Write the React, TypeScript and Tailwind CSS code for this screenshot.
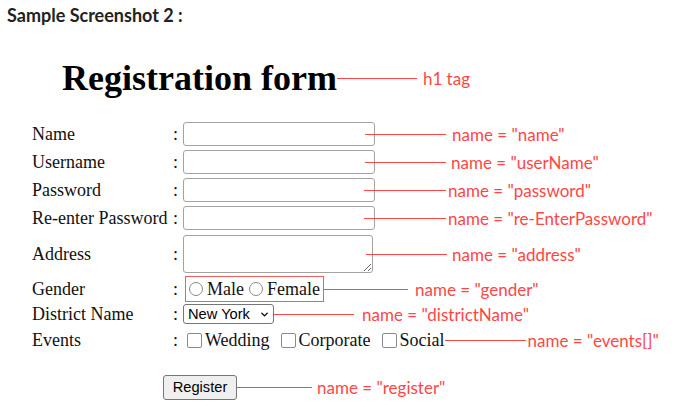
import { ChevronDown } from 'lucide-react';

const serif = "font-['Liberation_Serif',serif]";
const sans = "font-['Liberation_Sans',Arial,sans-serif]";

function Note({ line, gap, text, shift = 0 }: { line: number; gap: number; text: string; shift?: number }) {
  return (
    <div className="flex items-center relative z-10" style={{ marginLeft: shift }}>
      <div className="h-px bg-[#ff4646]" style={{ width: line }} />
      <span className="font-['Lato',sans-serif] text-[17px] leading-none text-[#ff4646] whitespace-nowrap" style={{ marginLeft: gap }}>
        {text}
      </span>
    </div>
  );
}

function Row({ label, h, children }: { label: string; h: string; children: React.ReactNode }) {
  return (
    <div className={`flex items-center ${h}`}>
      <span className="w-[141px] shrink-0">{label}</span>
      <span className="w-[10px] shrink-0">:</span>
      {children}
    </div>
  );
}

export default function App() {
  const field = 'w-[192px] h-[24px] shrink-0 border border-[#a3a3a3] rounded-[3px] bg-white';
  const box = 'appearance-none w-[15px] h-[15px] rounded-[2px] border border-[#8a8a8a] mr-[3px]';
  const radio = 'appearance-none w-[14px] h-[14px] rounded-full border border-[#8a8a8a] mr-[4px]';

  return (
    <div className="w-[682px] h-[420px] bg-white overflow-hidden text-[#111]">
      <p className="font-['Lato',sans-serif] font-bold text-[18px] leading-[20px] text-[#222] pl-[7px] pt-[5px]">
        Sample Screenshot 2 :
      </p>

      <div className="flex items-center mt-[35px] ml-[62px] h-[36px]">
        <h1 className={`${serif} font-bold text-[36px] leading-none text-black`}>Registration form</h1>
        <Note line={80} gap={6} text="h1 tag" />
      </div>

      <form className={`${serif} text-[18px] leading-none pl-[32px] mt-[24px]`}>
        <Row label="Name" h="h-[28px]">
          <input className={field} />
          <Note line={81} gap={6} text={'name = "name"'} shift={-10} />
        </Row>
        <Row label="Username" h="h-[28px]">
          <input className={field} />
          <Note line={81} gap={5} text={'name = "userName"'} shift={-10} />
        </Row>
        <Row label="Password" h="h-[28px]">
          <input className={field} type="password" />
          <Note line={82} gap={2} text={'name = "password"'} shift={-11} />
        </Row>
        <Row label="Re-enter Password" h="h-[28px]">
          <input className={field} type="password" />
          <Note line={82} gap={2} text={'name = "re-EnterPassword"'} shift={-11} />
        </Row>
        <Row label="Address" h="h-[44px]">
          <textarea className="w-[190px] h-[38px] shrink-0 border border-[#a3a3a3] rounded-[3px] bg-white" />
          <Note line={81} gap={5} text={'name = "address"'} shift={-7} />
        </Row>
        <Row label="Gender" h="h-[26px]">
          <div className="flex items-center h-[26px] ml-[2px] px-[3px] border border-[#f06060]">
            <input type="radio" name="gender" className={radio} />
            <span>Male</span>
            <input type="radio" name="gender" className={`${radio} ml-[5px]`} />
            <span>Female</span>
          </div>
          <Note line={84} gap={7} text={'name = "gender"'} />
        </Row>
        <Row label="District Name" h="h-[24px]">
          <div className="relative w-[91px] h-[20px] shrink-0">
            <select className={`${sans} appearance-none w-full h-full border border-[#767676] rounded-[3px] bg-white text-[14.67px] pl-[4px] text-black`}>
              <option>New York</option>
            </select>
            <ChevronDown className="absolute right-[4px] top-[5px] w-[11px] h-[11px] text-black pointer-events-none" strokeWidth={3} />
          </div>
          <Note line={80} gap={8} text={'name = "districtName"'} />
        </Row>
        <Row label="Events" h="h-[28px]">
          <div className="flex items-center ml-[4px]">
            <input type="checkbox" className={box} />
            <span>Wedding</span>
            <input type="checkbox" className={`${box} ml-[11px]`} />
            <span>Corporate</span>
            <input type="checkbox" className={`${box} ml-[11px]`} />
            <span>Social</span>
          </div>
          <Note line={81} gap={2} text={'name = "events[]"'} />
        </Row>

        <div className="flex items-center mt-[20px] ml-[131px] h-[26px]">
          <button type="button" className={`${sans} w-[74px] h-[25px] border border-[#767676] rounded-[3px] bg-[#efefef] text-[14.67px] text-black`}>
            Register
          </button>
          <Note line={75} gap={5} text={'name = "register"'} />
        </div>
      </form>
    </div>
  );
}
